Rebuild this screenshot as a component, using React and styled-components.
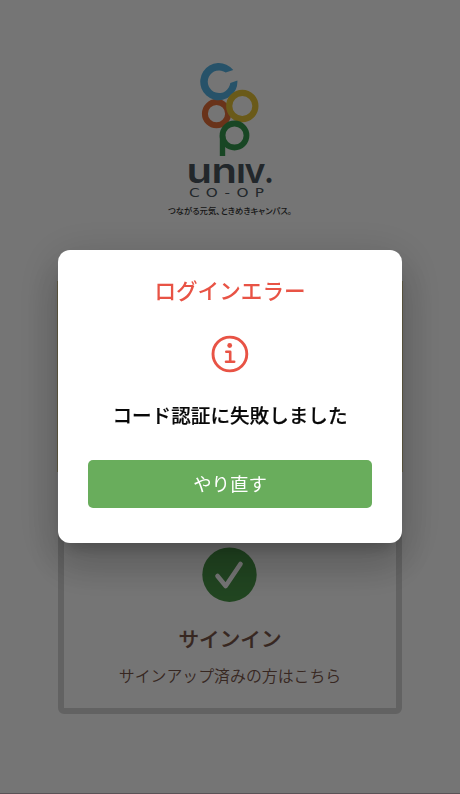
import React from "react";
import styled, { createGlobalStyle } from "styled-components";

const GlobalStyle = createGlobalStyle`
  * {
    box-sizing: border-box;
  }

  body {
    margin: 0;
    background: #ffffff;
    font-family: "Noto Sans CJK JP", "Noto Sans", sans-serif;
  }
`;

const wordLetters = [
  { char: "u", x: 1.6, width: 25.5 },
  { char: "n", x: 26.6, width: 25.5 },
  { char: "ı", x: 51, width: 10 },
  { char: "v", x: 59.5, width: 21 },
  { char: ".", x: 79, width: 10 },
];

const LogoMark = () => (
  <svg width="60" height="96" viewBox="200 62 60 96" fill="none">
    <circle cx="216.5" cy="113.7" r="11.6" stroke="#e5703a" strokeWidth="6" />
    <path
      d="M233.3 70 A18.6 18.6 0 1 0 237.4 80.6 L230.3 83 A11.3 11.3 0 1 1 225.7 72.6 Z"
      fill="#55b4e4"
    />
    <circle cx="242.3" cy="106" r="13.1" stroke="#e6c438" strokeWidth="6.2" />
    <circle cx="234.5" cy="135.5" r="12" stroke="#369a50" strokeWidth="5.8" />
    <path d="M222.5 135.5 V156" stroke="#369a50" strokeWidth="5.4" />
  </svg>
);

const App = () => {
  return (
    <>
      <GlobalStyle />
      <Page>
        <Logo>
          <LogoMark />
          <WordMark viewBox="0 0 90 26">
            <text y="24.5">
              {wordLetters.map(({ char, x, width }) => (
                <tspan
                  key={char}
                  x={x}
                  textLength={width}
                  lengthAdjust="spacingAndGlyphs"
                >
                  {char}
                </tspan>
              ))}
            </text>
          </WordMark>
          <CoopText viewBox="0 0 90 14">
            <text
              x="4"
              y="12.5"
              textLength="81"
              lengthAdjust="spacingAndGlyphs"
            >
              CO-OP
            </text>
          </CoopText>
          <Tagline viewBox="0 0 130 16">
            <text
              x="3"
              y="11.5"
              fontSize="8.5"
              textLength="124"
              lengthAdjust="spacingAndGlyphs"
            >
              つながる元気､ときめきキャンパス｡
            </text>
          </Tagline>
        </Logo>
        <SignUpCard />
        <SignInCard>
          <CheckIcon />
          <OptionTitle>サインイン</OptionTitle>
          <OptionText>サインアップ済みの方はこちら</OptionText>
        </SignInCard>
      </Page>
      <Overlay>
        <Modal>
          <ModalTitle>ログインエラー</ModalTitle>
          <InfoIcon />
          <Message>コード認証に失敗しました</Message>
          <RetryButton>やり直す</RetryButton>
        </Modal>
      </Overlay>
    </>
  );
};

const CheckIcon = () => (
  <svg width="56" height="56" viewBox="0 0 56 56" fill="none">
    <circle cx="27.5" cy="27.7" r="27.2" fill="#489647" />
    <path
      d="M15.5 29 L23.7 39 L38.5 17"
      stroke="#ffffff"
      strokeWidth="4.6"
      strokeLinecap="round"
      strokeLinejoin="round"
    />
  </svg>
);

const InfoIcon = () => (
  <svg width="38" height="38" viewBox="0 0 38 38" fill="none">
    <g stroke="#e85345" strokeLinecap="round" strokeLinejoin="round">
      <circle cx="18.9" cy="19" r="16.9" strokeWidth="2.9" />
      <path d="M15.3 16.7 H19.2 V26.7 M15 26.8 H23.2" strokeWidth="2.6" />
    </g>
    <circle cx="18.7" cy="10.5" r="2.4" fill="#e85345" />
  </svg>
);

export default App;

const Page = styled.div`
  display: flex;
  flex-direction: column;
  align-items: center;
  height: 794px;
  padding-top: 62px;
  overflow: hidden;
  border-bottom: 1px solid #c4b4bc;
`;

const Logo = styled.div`
  display: flex;
  flex-direction: column;
  align-items: center;
  flex-shrink: 0;
  height: 219px;
`;

const WordMark = styled.svg`
  width: 90px;
  height: 26px;
  overflow: visible;
  fill: #4a565e;
  font-family: Inter, sans-serif;
  font-size: 34px;
  font-weight: 600;
`;

const CoopText = styled.svg`
  width: 90px;
  height: 14px;
  margin-bottom: 4px;
  overflow: visible;
  fill: #4a565e;
  font-family: "DejaVu Sans", sans-serif;
  font-size: 12.4px;
  letter-spacing: 5px;
`;

const Tagline = styled.svg`
  width: 130px;
  height: 16px;
  overflow: visible;
  fill: #333333;
  font-weight: 500;
  font-feature-settings: "palt";
`;

const SignUpCard = styled.div`
  flex-shrink: 0;
  width: 346px;
  height: 191px;
  margin-bottom: 44px;
  border: 1px solid #d8cb98;
`;

const SignInCard = styled.div`
  display: flex;
  flex-direction: column;
  align-items: center;
  flex-shrink: 0;
  width: 344px;
  height: 198px;
  padding-top: 25px;
  border: 6px solid #d6d6d6;
  border-radius: 6px;
`;

const OptionTitle = styled.div`
  margin-top: 19px;
  font-size: 20.6px;
  line-height: 32px;
  font-weight: 500;
  color: #795548;
  -webkit-text-stroke: 0.2px #795548;
`;

const OptionText = styled.div`
  margin-top: 10px;
  font-size: 15.9px;
  line-height: 24px;
  font-weight: 350;
  color: #795548;
`;

const Overlay = styled.div`
  position: fixed;
  inset: 0;
  display: flex;
  justify-content: center;
  align-items: flex-start;
  padding-top: 250px;
  background: rgba(0, 0, 0, 0.54);
`;

const Modal = styled.div`
  display: flex;
  flex-direction: column;
  align-items: center;
  width: 344px;
  height: 293px;
  padding: 24px 30px 0;
  background: #ffffff;
  border-radius: 12px;
  box-shadow:
    0 11px 15px -7px rgba(0, 0, 0, 0.2),
    0 24px 38px 3px rgba(0, 0, 0, 0.14),
    0 9px 46px 8px rgba(0, 0, 0, 0.12);
`;

const ModalTitle = styled.div`
  margin-bottom: 29px;
  font-size: 21.6px;
  line-height: 32px;
  font-weight: 500;
  color: #e85345;
`;

const Message = styled.div`
  margin: 27px 0 30px;
  font-size: 19.6px;
  line-height: 30px;
  font-weight: 500;
  color: #080808;
  -webkit-text-stroke: 0.2px #080808;
`;

const RetryButton = styled.button`
  width: 284px;
  height: 48px;
  flex-shrink: 0;
  padding: 0 0 2px;
  border: none;
  border-radius: 5px;
  background: #69ad5c;
  color: #ffffff;
  font-family: inherit;
  font-size: 18.4px;
`;
